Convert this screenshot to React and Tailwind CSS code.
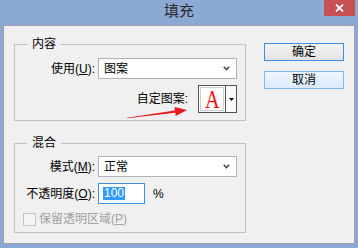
import React from "react";

function Chevron() {
  return (
    <svg width="7" height="5" viewBox="0 0 7 5" className="block">
      <path d="M0.8 0.8 L3.5 3.6 L6.2 0.8" fill="none" stroke="#4a4a4a" strokeWidth="1.6" />
    </svg>
  );
}

function Select({ value, width }) {
  return (
    <div className={`ml-[3px] h-[21px] ${width} flex items-center justify-between border border-[#adb2bb] bg-white pl-[5px] pr-[6px]`}>
      <span>{value}</span>
      <Chevron />
    </div>
  );
}

function Label({ children }) {
  return <div className="w-[80px] text-right whitespace-nowrap">{children}</div>;
}

function Key({ k }) {
  return <span className="underline underline-offset-[1px]">{k}</span>;
}

export default function App() {
  return (
    <div className="relative w-[358px] h-[248px] bg-[#8ca9d6] flex flex-col font-['Liberation_Sans','Noto_Sans_CJK_SC',sans-serif] text-[12px] leading-[14px] text-black overflow-hidden">
      {/* title bar */}
      <div className="h-[25px] grid grid-cols-[1fr_auto_1fr]">
        <div />
        <div className="pt-[2px] text-[15px] leading-[17px] text-[#2b2b2b]">填充</div>
        <div className="flex justify-end pr-[3px]">
          <div className="w-[31px] h-[16px] bg-[#c75050] flex items-center justify-center">
            <svg width="9" height="8" viewBox="0 0 9 8">
              <path d="M1 0.5 L8 7.5 M8 0.5 L1 7.5" stroke="#fff" strokeWidth="1.8" />
            </svg>
          </div>
        </div>
      </div>

      {/* client area */}
      <div className="ml-[3px] w-[352px] h-[219px] border border-[#9a9fa8] bg-[#f0f0f0] flex pt-[11px] pl-[10px]">
        <div className="w-[232px]">
          <fieldset className="border border-[#c2c2c2] w-[232px] pr-[8px] pb-[7px]">
            <legend className="ml-[12px] px-[5px] leading-[14px]">内容</legend>
            <div className="mt-[7px] flex items-center">
              <Label>
                使用(<Key k="U" />):
              </Label>
              <Select value="图案" width="w-[139px]" />
            </div>
            <div className="mt-[6px] flex items-center justify-end">
              <div className="mr-[10px]">自定图案:</div>
              <div className="w-[39px] h-[28px] border border-[#505050] flex bg-white">
                <div className="w-[27px] p-[1px] border-r border-[#505050]">
                  <div className="h-full border border-[#cfcfcf] flex items-center justify-center">
                    <span className="inline-block font-['Liberation_Serif',serif] text-[26px] leading-[20px] text-[#ff1010] scale-x-[0.78] pt-[1px]">A</span>
                  </div>
                </div>
                <div className="flex-1 flex items-center justify-center bg-[#fafafa]">
                  <svg width="5" height="3" viewBox="0 0 5 3">
                    <path d="M0 0 L5 0 L2.5 3 Z" fill="#000" />
                  </svg>
                </div>
              </div>
            </div>
          </fieldset>

          <fieldset className="mt-[15px] border border-[#c2c2c2] w-[232px] pr-[8px] pb-[6px]">
            <legend className="ml-[12px] px-[5px] leading-[14px]">混合</legend>
            <div className="mt-[6px] flex items-center">
              <Label>
                模式(<Key k="M" />):
              </Label>
              <Select value="正常" width="w-[139px]" />
            </div>
            <div className="mt-[6px] flex items-center">
              <Label>
                不透明度(<Key k="O" />):
              </Label>
              <div className="ml-[3px] w-[47px] h-[21px] border border-[#3c8fe6] bg-white flex items-center pl-[4px]">
                <span className="bg-[#3399ff] text-white px-[1px] leading-[13px]">100</span>
              </div>
              <span className="ml-[8px]">%</span>
            </div>
            <div className="mt-[8px] flex items-center pl-[8px] text-[#a0a0a0]">
              <div className="w-[13px] h-[13px] border border-[#c5c5c5] bg-[#f4f4f4]" />
              <span className="ml-[3px]">
                保留透明区域(<Key k="P" />)
              </span>
            </div>
          </fieldset>
        </div>

        <div className="ml-[18px] mt-[6px] flex flex-col">
          <button className="w-[80px] h-[18px] border border-[#3d8ee8] bg-gradient-to-b from-[#f3f3f3] to-[#e3e3e3] flex items-center justify-center leading-[14px]">
            确定
          </button>
          <button className="mt-[10px] w-[80px] h-[18px] border border-[#84b8ec] bg-gradient-to-b from-[#eef5fd] to-[#dcebfb] flex items-center justify-center leading-[14px]">
            取消
          </button>
        </div>
      </div>

      {/* red annotation arrow */}
      <svg className="absolute left-[120px] top-[100px]" width="75" height="25" viewBox="0 0 75 25">
        <polygon points="6.9,17.7 54.9,10.4 55.3,12.8 7.1,18.3" fill="#e8191e" />
        <polygon points="67,10 55.7,16.1 54.5,7.1" fill="#e8191e" />
      </svg>
    </div>
  );
}
